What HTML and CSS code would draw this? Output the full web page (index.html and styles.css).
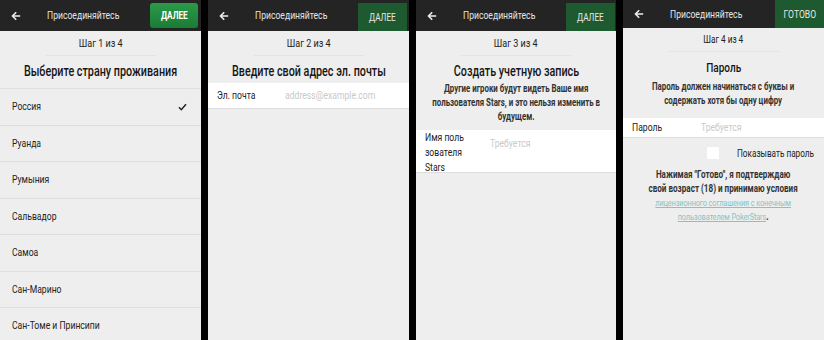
FILE: index.html
```html
<!DOCTYPE html>
<html lang="ru">
<head>
<meta charset="utf-8">
<link rel="stylesheet" href="styles.css">
</head>
<body>
<div class="screens">
  <section class="panel p1">
    <header class="bar">
      <svg class="back" width="10" height="10" viewBox="0 0 10 10"><path d="M9.2 5H1.8M5.2 1.3L1.5 5l3.7 3.7" fill="none" stroke="#ececec" stroke-width="1.6"/></svg>
      <span class="bar-title"><span class="t">Присоединяйтесь</span></span>
      <span class="btn btn-bright"><span class="t">ДАЛЕЕ</span></span>
    </header>
    <div class="step"><span class="t">Шаг 1 из 4</span></div>
    <div class="rule"></div>
    <h2 class="title t1"><span class="t">Выберите страну проживания</span></h2>
    <ul class="list">
      <li class="item"><span class="t">Россия</span><svg class="check" width="9" height="8" viewBox="0 0 9 8"><path d="M1 4.3l2.3 2.4L8 1.2" fill="none" stroke="#222" stroke-width="1.5"/></svg></li>
      <li class="item"><span class="t">Руанда</span></li>
      <li class="item"><span class="t">Румыния</span></li>
      <li class="item"><span class="t">Сальвадор</span></li>
      <li class="item"><span class="t">Самоа</span></li>
      <li class="item"><span class="t">Сан-Марино</span></li>
      <li class="item"><span class="t">Сан-Томе и Принсипи</span></li>
    </ul>
  </section>

  <section class="panel p2">
    <header class="bar">
      <svg class="back" width="10" height="10" viewBox="0 0 10 10"><path d="M9.2 5H1.8M5.2 1.3L1.5 5l3.7 3.7" fill="none" stroke="#ececec" stroke-width="1.6"/></svg>
      <span class="bar-title"><span class="t">Присоединяйтесь</span></span>
      <span class="btn btn-dark"><span class="t">ДАЛЕЕ</span></span>
    </header>
    <div class="step"><span class="t">Шаг 2 из 4</span></div>
    <div class="rule"></div>
    <h2 class="title t2"><span class="t">Введите свой адрес эл. почты</span></h2>
    <div class="field f2">
      <span class="label"><span class="t">Эл. почта</span></span>
      <span class="ph"><span class="t">address@example.com</span></span>
    </div>
  </section>

  <section class="panel p3">
    <header class="bar">
      <svg class="back" width="10" height="10" viewBox="0 0 10 10"><path d="M9.2 5H1.8M5.2 1.3L1.5 5l3.7 3.7" fill="none" stroke="#ececec" stroke-width="1.6"/></svg>
      <span class="bar-title"><span class="t">Присоединяйтесь</span></span>
      <span class="btn btn-dark b3"><span class="t">ДАЛЕЕ</span></span>
    </header>
    <div class="step"><span class="t">Шаг 3 из 4</span></div>
    <div class="rule"></div>
    <h2 class="title t3"><span class="t">Создать учетную запись</span></h2>
    <p class="desc d3"><span class="t">Другие игроки будут видеть Ваше имя<br>пользователя Stars, и это нельзя изменить в<br>будущем.</span></p>
    <div class="field f3">
      <span class="label label3"><span class="t">Имя поль<br>зователя<br>Stars</span></span>
      <span class="ph ph3"><span class="t">Требуется</span></span>
    </div>
  </section>

  <section class="panel p4">
    <header class="bar bar4">
      <svg class="back" width="10" height="10" viewBox="0 0 10 10"><path d="M9.2 5H1.8M5.2 1.3L1.5 5l3.7 3.7" fill="none" stroke="#ececec" stroke-width="1.6"/></svg>
      <span class="bar-title"><span class="t">Присоединяйтесь</span></span>
      <span class="btn btn-full"><span class="t">ГОТОВО</span></span>
    </header>
    <div class="step s4"><span class="t">Шаг 4 из 4</span></div>
    <div class="rule"></div>
    <h2 class="title t4"><span class="t">Пароль</span></h2>
    <p class="desc d4"><span class="t">Пароль должен начинаться с буквы и<br>содержать хотя бы одну цифру</span></p>
    <div class="field f4">
      <span class="label label4"><span class="t">Пароль</span></span>
      <span class="ph"><span class="t">Требуется</span></span>
    </div>
    <div class="show">
      <span class="box"></span>
      <span class="show-text"><span class="t">Показывать пароль</span></span>
    </div>
    <p class="desc terms"><span class="t">Нажимая "Готово", я подтверждаю<br>свой возраст (18) и принимаю условия<br><a class="link" href="#">лицензионного соглашения с конечным<br>пользователем PokerStars</a>.</span></p>
  </section>
</div>
</body>
</html>
```

FILE: styles.css
```css
* { box-sizing: border-box; }
html, body { margin: 0; padding: 0; }
body {
  background: #000;
  font-family: Roboto, "DejaVu Sans Condensed", sans-serif;
  color: #222;
}
/* condensed text face: the app uses a narrow sans */
.t {
  display: inline-block;
  white-space: nowrap;
  transform: scaleX(var(--sx, 0.82));
  transform-origin: left center;
}
.screens {
  display: flex;
  gap: 7px;
  width: 824px;
  height: 340px;
}
.panel {
  background: #eeeeee;
  height: 340px;
  overflow: hidden;
  flex: 0 0 201px;
}
.p3 { flex-basis: 200px; }

.bar {
  height: 31px;
  background: #242424;
  display: flex;
  align-items: center;
  color: #e4e4e4;
}
.bar4 { height: 28px; }
.back { margin-left: 11px; flex: none; }
.bar-title {
  margin-left: 26px;
  flex: 1;
  font-size: 10.5px;
}
.btn {
  color: #e8e8e8;
  font-size: 10px;
  display: flex;
  align-items: center;
  justify-content: center;
  width: 49px;
  flex: none;
}
.btn .t { transform-origin: center; }
.btn-bright {
  height: 25px;
  width: 48px;
  margin-right: 3px;
  border-radius: 3px;
  background: linear-gradient(#2b9a48, #1a7c35);
  color: #fff;
  font-weight: bold;
}
.btn-dark {
  height: 28px;
  align-self: flex-end;
  margin-right: 2px;
  background: #1d5a2f;
}
.b3 { margin-right: 1px; }
.btn-full {
  height: 28px;
  background: #1d5a2f;
  font-size: 10.5px;
}

.step, .title, .desc {
  display: flex;
  flex-direction: column;
  align-items: center;
  text-align: center;
}
.step .t, .title .t, .desc .t { transform-origin: center; }
.step {
  font-size: 11px;
  line-height: 14px;
  padding-top: 6px;
  color: #222;
}
.s4 { padding-top: 5px; font-size: 10px; }
.rule {
  width: 110px;
  height: 1px;
  margin: 4px auto 0;
  background: #e3e3e3;
}
.title {
  --sx: 0.77;
  margin: 6px 0 0;
  font-size: 14px;
  line-height: 18px;
  font-weight: 500;
  color: #151515;
}
.t4 { margin-top: 7px; font-size: 13px; }

.list {
  list-style: none;
  margin: 8px 0 0;
  padding: 0;
  border-top: 1px solid #dedede;
}
.item {
  height: 36.5px;
  display: flex;
  align-items: center;
  justify-content: space-between;
  padding: 0 12px;
  font-size: 10.5px;
  border-bottom: 1px solid #dedede;
}
.check { margin-right: 2px; }

.field {
  background: #fff;
  display: flex;
  font-size: 10.5px;
  border-bottom: 1px solid #dcdcdc;
  padding-left: 9px;
}
.label { color: #222; flex: none; width: 68px; }
.ph { color: #c9c9c9; }
.f2 {
  margin-top: 3px;
  height: 26px;
  align-items: center;
}

.desc {
  --sx: 0.79;
  margin: 0;
  font-size: 10px;
  font-weight: bold;
  line-height: 14px;
  color: #333;
}
.d3 { margin-top: 2px; }
.f3 {
  margin-top: 6px;
  height: 43px;
  align-items: flex-start;
}
.label3 { line-height: 15px; width: 65px; }
.ph3 { margin-top: 7px; }

.d4 { margin-top: 3px; }
.f4 {
  margin-top: 10px;
  height: 20px;
  align-items: center;
}
.label4 { width: 69px; }
.show {
  display: flex;
  align-items: center;
  gap: 18px;
  padding-left: 84px;
  margin-top: 9px;
  height: 12px;
  font-size: 10.5px;
  --sx: 0.78;
}
.box {
  width: 12px;
  height: 12px;
  background: #fff;
  flex: none;
}
.terms { margin-top: 9px; --sx: 0.81; }
.link {
  color: #7ec6c6;
  text-decoration: underline;
  font-weight: normal;
  font-size: 9px;
  letter-spacing: -0.1px;
}
```
